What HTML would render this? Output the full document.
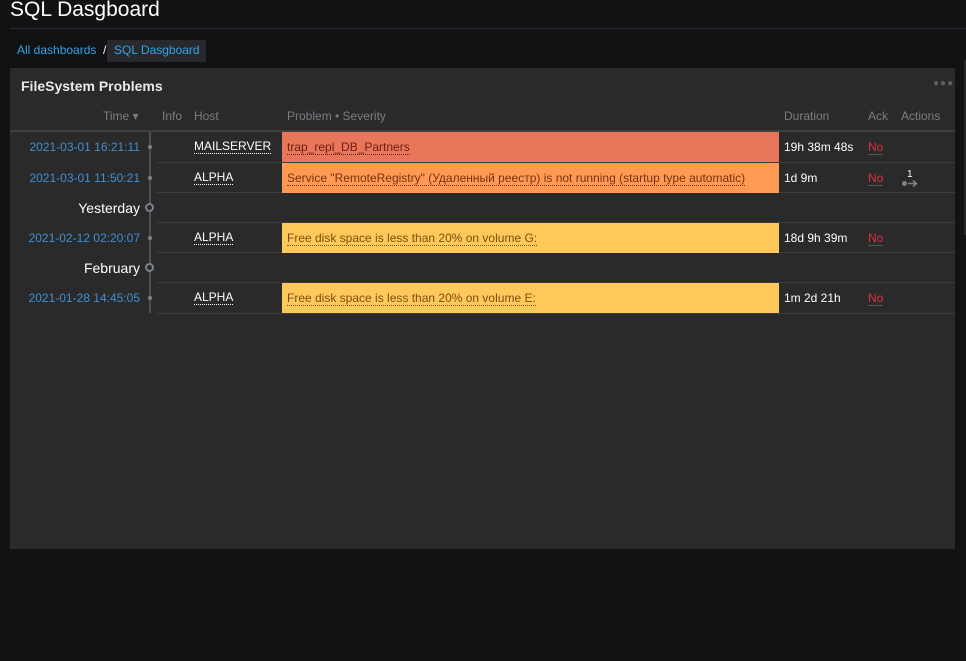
<!DOCTYPE html>
<html><head><meta charset="utf-8"><style>
*{margin:0;padding:0;box-sizing:border-box}
body{width:966px;height:661px;background:#111214;font-family:"Liberation Sans","Noto Sans CJK SC",sans-serif;position:relative;overflow:hidden;color:#d8d9da}
.abs{position:absolute}
.title{left:10px;top:-2px;font-size:21px;color:#fff}
.hr{left:10px;top:28px;width:956px;height:1px;background:#2c2d30}
.bc{top:43px;font-size:12px;color:#33a2e5}
.panel{left:10px;top:68px;width:945px;height:481px;background:#2a2a2b}
.side{left:964px;top:60px;width:2px;height:175px;background:#262628}
.ptitle{left:21px;top:78px;font-size:14px;font-weight:bold;color:#e8e8e8}
.dots{left:933px;top:78px;font-size:10px;color:#5a6068;letter-spacing:1px}
.th{top:109px;font-size:12px;color:#7b7d82}
.hl{left:10px;top:130px;width:945px;height:2px;background:#3e3f41}
.sep{left:157px;width:798px;height:1px;background:#3b3c3e}
.time{font-size:12px;color:#3f8fd2;right:826px;text-align:right}
.grp{font-size:14px;color:#fff;right:826px;text-align:right}
.vl{left:149px;top:132px;width:2px;height:181px;background:#4a5058}
.dot{width:4px;height:4px;border-radius:2px;background:#7a828c;left:148px}
.ring{width:9px;height:9px;border-radius:5px;border:2px solid #7a828c;background:#2a2a2b;left:145px}
.host{left:194px;font-size:12px;color:#fff;border-bottom:1px dotted #fff;line-height:13px}
.prob{left:282px;width:497px;height:30px;padding:8px 5px;font-size:12px}
.prob span{border-bottom:1px dotted currentColor}
.dur{left:784px;font-size:12px;color:#fff}
.ack{left:868px;font-size:12px;color:#e02f44;border-bottom:1px solid #555;line-height:14px}
</style></head><body>
<div class="abs title">SQL Dasgboard</div>
<div class="abs hr"></div>
<div class="abs bc" style="left:17px">All dashboards</div>
<div class="abs bc" style="left:103px;color:#fff">/</div>
<div class="abs" style="left:107px;top:40px;width:99px;height:22px;background:#27292c"></div>
<div class="abs bc" style="left:114px">SQL Dasgboard</div>
<div class="abs side"></div>
<div class="abs panel"></div>
<div class="abs ptitle">FileSystem Problems</div>
<div class="abs dots">●●●</div>
<div class="abs th" style="left:103px">Time ▾</div>
<div class="abs th" style="left:162px">Info</div>
<div class="abs th" style="left:194px">Host</div>
<div class="abs th" style="left:287px">Problem • Severity</div>
<div class="abs th" style="left:784px">Duration</div>
<div class="abs th" style="left:868px">Ack</div>
<div class="abs th" style="left:901px">Actions</div>
<div class="abs hl"></div>
<div class="abs vl"></div>

<div class="abs sep" style="top:162px"></div>
<div class="abs sep" style="top:192px"></div>
<div class="abs sep" style="top:222px"></div>
<div class="abs sep" style="top:252px"></div>
<div class="abs sep" style="top:282px"></div>
<div class="abs sep" style="top:313px"></div>

<div class="abs time" style="top:140px">2021-03-01 16:21:11</div>
<div class="abs dot" style="top:145px"></div>
<div class="abs host" style="top:140px">MAILSERVER</div>
<div class="abs prob" style="top:132px;background:#e8765b;color:#6b1e12"><span>trap_repl_DB_Partners</span></div>
<div class="abs dur" style="top:140px">19h 38m 48s</div>
<div class="abs ack" style="top:140px">No</div>

<div class="abs time" style="top:171px">2021-03-01 11:50:21</div>
<div class="abs dot" style="top:176px"></div>
<div class="abs host" style="top:171px">ALPHA</div>
<div class="abs prob" style="top:163px;background:#ff9954;color:#7a3310"><span>Service "RemoteRegistry" (Удаленный реестр) is not running (startup type automatic)</span></div>
<div class="abs dur" style="top:171px">1d 9m</div>
<div class="abs ack" style="top:171px">No</div>
<div class="abs" style="left:907px;top:169px;font-size:10px;color:#fff">1</div>
<div class="abs" style="left:902px;top:181px;width:5px;height:5px;border-radius:3px;background:#7a828c"></div>
<svg class="abs" style="left:908px;top:179px" width="10" height="9"><path d="M0 4.5H8M5 1.5L8.5 4.5L5 7.5" stroke="#7a828c" stroke-width="1.5" fill="none"/></svg>

<div class="abs grp" style="top:200px">Yesterday</div>
<div class="abs ring" style="top:203px"></div>

<div class="abs time" style="top:231px">2021-02-12 02:20:07</div>
<div class="abs dot" style="top:236px"></div>
<div class="abs host" style="top:231px">ALPHA</div>
<div class="abs prob" style="top:223px;background:#ffc85a;color:#7a5010"><span>Free disk space is less than 20% on volume G:</span></div>
<div class="abs dur" style="top:231px">18d 9h 39m</div>
<div class="abs ack" style="top:231px">No</div>

<div class="abs grp" style="top:260px">February</div>
<div class="abs ring" style="top:263px"></div>

<div class="abs time" style="top:291px">2021-01-28 14:45:05</div>
<div class="abs dot" style="top:296px"></div>
<div class="abs host" style="top:291px">ALPHA</div>
<div class="abs prob" style="top:283px;background:#ffc85a;color:#7a5010"><span>Free disk space is less than 20% on volume E:</span></div>
<div class="abs dur" style="top:291px">1m 2d 21h</div>
<div class="abs ack" style="top:291px">No</div>
</body></html>
